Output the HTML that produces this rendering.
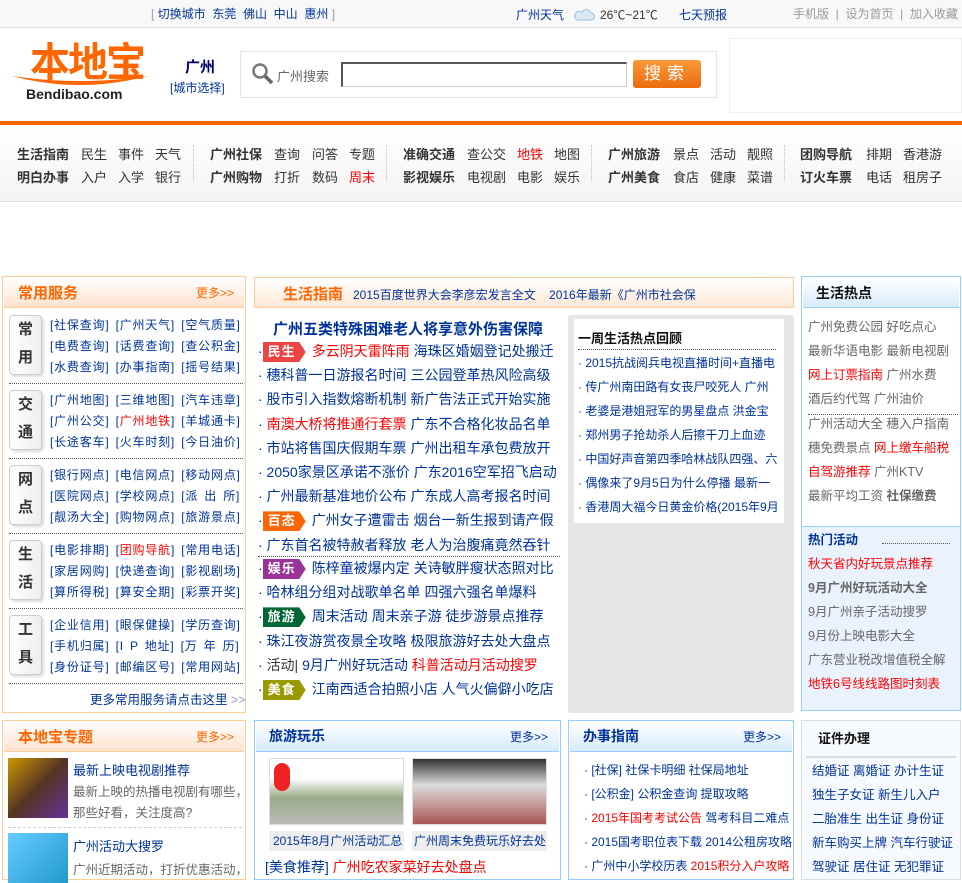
<!DOCTYPE html>
<html><head><meta charset="utf-8"><style>
*{margin:0;padding:0;box-sizing:border-box}
body{width:962px;height:875px;overflow:hidden;background:#fff;font-family:"Liberation Sans","Noto Sans CJK SC","WenQuanYi Zen Hei",sans-serif;font-size:12px;color:#333;position:relative}
.a{position:absolute;white-space:nowrap}
.b{color:#039}.r{color:#f00}.g{color:#666}.k{color:#333}
.top{left:0;top:0;width:962px;height:28px;background:#f8f8f8;border-bottom:1px solid #e0e0e0}
.nav{left:0;top:125px;width:962px;height:77px;background:linear-gradient(#fff,#f4f4f4);border-bottom:1px solid #e2e2e2}
.nav span{position:absolute;font-size:13px}
.nav b{position:absolute;font-size:13px;color:#333}
.sep{position:absolute;top:20px;height:36px;border-left:1px dotted #bbb}
.box{position:absolute;border:1px solid #fc9}
.oh{height:30px;background:linear-gradient(#fff,#fde2cc);border-bottom:1px solid #fc9;margin:1px}
.bh{height:30px;background:linear-gradient(#fff,#d6ebfb);border-bottom:1px solid #9cf;margin:1px}
.lab{position:absolute;left:6px;width:33px;height:60px;border:1px solid #ccc;border-radius:4px;background:linear-gradient(90deg,#fff,#eee);box-shadow:2px 2px 2px #ddd;font-size:15px;color:#333;text-align:center;line-height:28px;font-weight:bold}
.row{position:absolute;left:47px;font-size:12px;color:#039;letter-spacing:0.8px;word-spacing:2px;white-space:nowrap}
.ld{position:absolute;left:6px;width:234px;border-top:1px dotted #555}
.tag{display:inline-block;color:#fff;font-weight:bold;font-size:13px;padding:0 10px 0 5px;height:20px;line-height:20px;margin-right:6px;letter-spacing:1px;clip-path:polygon(0 0,85% 0,100% 50%,85% 100%,0 100%)}
.gl{position:absolute;left:578px;font-size:12px;color:#039;white-space:nowrap}
.rr{position:absolute;left:808px;font-size:12.5px;color:#666;white-space:nowrap}
.bd{position:absolute;left:584px;font-size:12px;color:#039;white-space:nowrap}
.zj{position:absolute;left:812px;font-size:12.5px;color:#039;white-space:nowrap}
</style></head><body>
<div class="a top"></div>
<div class="a" style="left:151px;top:5px;font-size:12px;color:#999">[ <span class="b">切换城市&nbsp; 东莞&nbsp; 佛山&nbsp; 中山&nbsp; 惠州</span> ]</div>
<div class="a b" style="left:516px;top:6px;font-size:12px">广州天气</div>
<svg class="a" style="left:573px;top:7px" width="22" height="14"><path d="M4 13h14a3.5 3.5 0 0 0 0-7 5 5 0 0 0-9-1 4 4 0 0 0-5 8z" fill="#dbe9f5" stroke="#9bbfdd"/></svg>
<div class="a k" style="left:600px;top:6px;font-size:12px">26℃~21℃</div>
<div class="a b" style="left:679px;top:6px;font-size:12px">七天预报</div>
<div class="a" style="left:793px;top:5px;font-size:12px;color:#999">手机版 &nbsp;|&nbsp; 设为首页 &nbsp;|&nbsp; 加入收藏</div>

<div class="a" style="left:30px;top:40px;font-size:40px;font-weight:bold;color:#f60;letter-spacing:-2px;line-height:46px">本地宝</div>
<svg class="a" style="left:10px;top:72px" width="140" height="16"><path d="M2 4Q70 22 138 4Q70 14 2 4z" fill="#f60"/></svg>
<div class="a" style="left:26px;top:86px;font-size:14px;font-weight:bold;color:#222">Bendibao.com</div>
<div class="a" style="left:185px;top:56px;font-size:15px;font-weight:bold;color:#006">广州</div>
<div class="a" style="left:170px;top:79px;font-size:12px;color:#039">[城市选择]</div>
<div class="a" style="left:240px;top:51px;width:477px;height:47px;border:1px solid #e3e3e3"></div>
<svg class="a" style="left:251px;top:62px" width="24" height="24"><circle cx="9" cy="9" r="6.5" fill="none" stroke="#777" stroke-width="2.5"/><path d="M14 14l7 7" stroke="#666" stroke-width="3.5"/></svg>
<div class="a g" style="left:277px;top:66px;font-size:13px">广州搜索</div>
<div class="a" style="left:341px;top:62px;width:286px;height:25px;border:1px solid #ccc;border-top:2px solid #555;border-left:2px solid #555"></div>
<div class="a" style="left:633px;top:60px;width:68px;height:28px;border-radius:3px;background:linear-gradient(#fa9a3a,#ec6b0c);color:#fff;font-size:17px;text-align:center;line-height:28px;letter-spacing:6px">搜索</div>
<div class="a" style="left:729px;top:38px;width:233px;height:75px;border:1px solid #eee"></div>
<div class="a" style="left:0;top:121px;width:962px;height:4px;background:#f60"></div>

<div class="a nav">
<b style="left:17px;top:19px">生活指南</b><span style="left:81px;top:19px">民生</span><span style="left:118px;top:19px">事件</span><span style="left:155px;top:19px">天气</span>
<b style="left:17px;top:42px">明白办事</b><span style="left:81px;top:42px">入户</span><span style="left:118px;top:42px">入学</span><span style="left:155px;top:42px">银行</span>
<div class="sep" style="left:193px"></div>
<b style="left:210px;top:19px">广州社保</b><span style="left:274px;top:19px">查询</span><span style="left:312px;top:19px">问答</span><span style="left:349px;top:19px">专题</span>
<b style="left:210px;top:42px">广州购物</b><span style="left:274px;top:42px">打折</span><span style="left:312px;top:42px">数码</span><span class="r" style="left:349px;top:42px">周末</span>
<div class="sep" style="left:386px"></div>
<b style="left:403px;top:19px">准确交通</b><span style="left:467px;top:19px">查公交</span><span class="r" style="left:517px;top:19px">地铁</span><span style="left:554px;top:19px">地图</span>
<b style="left:403px;top:42px">影视娱乐</b><span style="left:467px;top:42px">电视剧</span><span style="left:517px;top:42px">电影</span><span style="left:554px;top:42px">娱乐</span>
<div class="sep" style="left:591px"></div>
<b style="left:608px;top:19px">广州旅游</b><span style="left:673px;top:19px">景点</span><span style="left:710px;top:19px">活动</span><span style="left:747px;top:19px">靓照</span>
<b style="left:608px;top:42px">广州美食</b><span style="left:673px;top:42px">食店</span><span style="left:710px;top:42px">健康</span><span style="left:747px;top:42px">菜谱</span>
<div class="sep" style="left:784px"></div>
<b style="left:800px;top:19px">团购导航</b><span style="left:866px;top:19px">排期</span><span style="left:903px;top:19px">香港游</span>
<b style="left:800px;top:42px">订火车票</b><span style="left:866px;top:42px">电话</span><span style="left:903px;top:42px">租房子</span>
</div>

<div class="box" style="left:2px;top:276px;width:244px;height:437px">
<div class="oh"><span class="a" style="left:15px;top:5px;font-size:15px;font-weight:bold;color:#f60">常用服务</span><span class="a" style="left:193px;top:7px;font-size:12px;color:#f60">更多&gt;&gt;</span></div>
<div class="lab" style="top:38px">常<br>用</div>
<div class="row" style="top:39px">[社保查询] [广州天气] [空气质量]</div>
<div class="row" style="top:60px">[电费查询] [话费查询] [查公积金]</div>
<div class="row" style="top:81px">[水费查询] [办事指南] [摇号结果]</div>
<div class="ld" style="top:106px"></div>
<div class="lab" style="top:113px">交<br>通</div>
<div class="row" style="top:114px">[广州地图] [三维地图] [汽车违章]</div>
<div class="row" style="top:135px">[广州公交] [<span class="r">广州地铁</span>] [羊城通卡]</div>
<div class="row" style="top:156px">[长途客车] [火车时刻] [今日油价]</div>
<div class="ld" style="top:181px"></div>
<div class="lab" style="top:188px">网<br>点</div>
<div class="row" style="top:189px">[银行网点] [电信网点] [移动网点]</div>
<div class="row" style="top:210px">[医院网点] [学校网点] [派 出 所]</div>
<div class="row" style="top:231px">[靓汤大全] [购物网点] [旅游景点]</div>
<div class="ld" style="top:256px"></div>
<div class="lab" style="top:263px">生<br>活</div>
<div class="row" style="top:264px">[电影排期] [<span class="r">团购导航</span>] [常用电话]</div>
<div class="row" style="top:285px">[家居网购] [快递查询] [影视剧场]</div>
<div class="row" style="top:306px">[算所得税] [算安全期] [彩票开奖]</div>
<div class="ld" style="top:331px"></div>
<div class="lab" style="top:338px">工<br>具</div>
<div class="row" style="top:339px">[企业信用] [眼保健操] [学历查询]</div>
<div class="row" style="top:360px">[手机归属] [I P 地址] [万 年 历]</div>
<div class="row" style="top:381px">[身份证号] [邮编区号] [常用网站]</div>
<div class="ld" style="top:406px"></div>
<div class="a" style="left:87px;top:412px;font-size:12.5px;color:#039">更多常用服务请点击这里 <span style="color:#99c">&gt;&gt;</span></div>
</div>

<div class="box" style="left:254px;top:277px;width:540px;height:31px;background:linear-gradient(#fff,#fde8d6)">
<span class="a" style="left:28px;top:5px;font-size:15px;font-weight:bold;color:#f60">生活指南</span>
<span class="a b" style="left:98px;top:8px;font-size:12px">2015百度世界大会李彦宏发言全文 &nbsp;&nbsp; 2016年最新《广州市社会保</span>
</div>
<div class="a" style="left:273px;top:318px;font-size:15px;font-weight:bold;color:#039">广州五类特殊困难老人将享意外伤害保障</div>
<div class="a" style="left:258px;top:339px;font-size:14px;color:#039;line-height:24.2px;white-space:pre">·<span class="tag" style="background:#e44">民生</span><span class="r">多云阴天雷阵雨</span> 海珠区婚姻登记处搬迁
· 穗科普一日游报名时间 三公园登革热风险高级
· 股市引入指数熔断机制 新广告法正式开始实施
· <span class="r">南澳大桥将推通行套票</span> 广东不合格化妆品名单
· 市站将售国庆假期车票 广州出租车承包费放开
· 2050家景区承诺不涨价 广东2016空军招飞启动
· 广州最新基准地价公布 广东成人高考报名时间
·<span class="tag" style="background:#f60">百态</span>广州女子遭雷击 烟台一新生报到请产假
· 广东首名被特赦者释放 老人为治腹痛竟然吞针</div>
<div class="a" style="left:258px;top:556px;width:302px;border-top:1px dotted #555"></div>
<div class="a" style="left:258px;top:556px;font-size:14px;color:#039;line-height:24.2px;white-space:pre">·<span class="tag" style="background:#939">娱乐</span>陈梓童被爆内定 关诗敏胖瘦状态照对比
· 哈林组分组对战歌单名单 四强六强名单爆料
·<span class="tag" style="background:#063">旅游</span>周末活动 周末亲子游 徒步游景点推荐
· 珠江夜游赏夜景全攻略 极限旅游好去处大盘点
· <span class="k">活动|</span> 9月广州好玩活动 <span class="r">科普活动月活动搜罗</span>
·<span class="tag" style="background:#990">美食</span>江南西适合拍照小店 人气火偏僻小吃店</div>

<div class="a" style="left:568px;top:315px;width:226px;height:398px;background:#e6e6e6;border-radius:3px"></div>
<div class="a" style="left:574px;top:319px;width:210px;height:204px;background:#fff"></div>
<div class="a" style="left:578px;top:328px;font-size:13px;font-weight:bold;color:#111">一周生活热点回顾</div>
<div class="a" style="left:578px;top:349px;width:198px;border-top:1px dotted #555"></div>
<div class="gl" style="top:354px">· 2015抗战阅兵电视直播时间+直播电</div>
<div class="gl" style="top:378px">· 传广州南田路有女丧尸咬死人 广州</div>
<div class="gl" style="top:402px">· 老婆是港姐冠军的男星盘点 洪金宝</div>
<div class="gl" style="top:426px">· 郑州男子抢劫杀人后擦干刀上血迹</div>
<div class="gl" style="top:450px">· 中国好声音第四季哈林战队四强、六</div>
<div class="gl" style="top:474px">· 偶像来了9月5日为什么停播 最新一</div>
<div class="gl" style="top:498px">· 香港周大福今日黄金价格(2015年9月</div>

<div class="a" style="left:801px;top:276px;width:160px;height:435px;border:1px solid #9cf;background:#fff">
<div class="bh"><span class="a" style="left:14px;top:6px;font-size:14px;font-weight:bold;color:#111">生活热点</span></div>
<div class="a" style="left:0;top:249px;width:158px;height:184px;background:#eaf3fd;border-top:1px solid #9cf"></div>
<div class="a" style="left:6px;top:137px;width:150px;border-top:1px dotted #555"></div>
<div class="a" style="left:80px;top:266px;width:68px;border-top:1px dotted #555"></div>
</div>
<div class="rr" style="top:316px">广州免费公园 好吃点心</div>
<div class="rr" style="top:340px">最新华语电影 最新电视剧</div>
<div class="rr" style="top:364px"><span class="r">网上订票指南</span> 广州水费</div>
<div class="rr" style="top:388px">酒后约代驾 广州油价</div>
<div class="rr" style="top:413px">广州活动大全 穗入户指南</div>
<div class="rr" style="top:437px">穗免费景点 <span class="r">网上缴车船税</span></div>
<div class="rr" style="top:461px"><span class="r">自驾游推荐</span> 广州KTV</div>
<div class="rr" style="top:485px">最新平均工资 <b>社保缴费</b></div>
<div class="rr" style="top:529px;color:#039;font-weight:bold">热门活动</div>
<div class="rr" style="top:553px;color:#f00">秋天省内好玩景点推荐</div>
<div class="rr" style="top:577px;font-weight:bold">9月广州好玩活动大全</div>
<div class="rr" style="top:601px">9月广州亲子活动搜罗</div>
<div class="rr" style="top:625px">9月份上映电影大全</div>
<div class="rr" style="top:649px">广东营业税改增值税全解</div>
<div class="rr" style="top:673px;color:#f00">地铁6号线线路图时刻表</div>

<div class="box" style="left:2px;top:720px;width:244px;height:160px">
<div class="oh"><span class="a" style="left:15px;top:5px;font-size:15px;font-weight:bold;color:#f60">本地宝专题</span><span class="a" style="left:193px;top:7px;font-size:12px;color:#f60">更多&gt;&gt;</span></div>
<div class="a" style="left:5px;top:37px;width:60px;height:60px;background:linear-gradient(135deg,#c90,#532 50%,#639)"></div>
<div class="a b" style="left:70px;top:39px;font-size:13px">最新上映电视剧推荐</div>
<div class="a g" style="left:70px;top:61px;font-size:12.5px;line-height:21px">最新上映的热播电视剧有哪些，<br>那些好看，关注度高?</div>
<div class="a" style="left:5px;top:106px;width:234px;border-top:1px dashed #ccc"></div>
<div class="a" style="left:5px;top:112px;width:60px;height:50px;background:linear-gradient(135deg,#6cf,#29c)"></div>
<div class="a b" style="left:70px;top:115px;font-size:13px">广州活动大搜罗</div>
<div class="a g" style="left:70px;top:138px;font-size:12.5px">广州近期活动，打折优惠活动，</div>
</div>
<div class="a" style="left:254px;top:720px;width:307px;height:160px;border:1px solid #9cf">
<div class="bh"><span class="a" style="left:14px;top:5px;font-size:14px;font-weight:bold;color:#039">旅游玩乐</span><span class="a b" style="left:255px;top:7px;font-size:12px">更多&gt;&gt;</span></div>
<div class="a" style="left:14px;top:37px;width:135px;height:67px;border:1px solid #ddd;background:linear-gradient(#fff 30%,#9a8 60%,#bbb);"><div class="a" style="left:4px;top:4px;width:16px;height:28px;background:#e22;border-radius:8px"></div></div>
<div class="a" style="left:157px;top:37px;width:135px;height:67px;border:1px solid #ddd;background:linear-gradient(#333,#ddd 40%,#a55)"></div>
<div class="a b" style="left:14px;top:110px;width:135px;height:20px;background:#eee;font-size:12px;line-height:20px;padding-left:4px">2015年8月广州活动汇总</div>
<div class="a b" style="left:157px;top:110px;width:135px;height:20px;background:#eee;font-size:12px;line-height:20px;padding-left:2px;overflow:hidden">广州周末免费玩乐好去处</div>
<div class="a" style="left:10px;top:136px;font-size:14px"><span class="b">[美食推荐]</span> <span class="r">广州吃农家菜好去处盘点</span></div>
</div>
<div class="a" style="left:568px;top:720px;width:226px;height:160px;border:1px solid #9cf">
<div class="bh"><span class="a" style="left:14px;top:5px;font-size:14px;font-weight:bold;color:#039">办事指南</span><span class="a b" style="left:174px;top:7px;font-size:12px">更多&gt;&gt;</span></div>
</div>
<div class="bd" style="top:761px">· [社保] 社保卡明细 社保局地址</div>
<div class="bd" style="top:785px">· [公积金] 公积金查询 提取攻略</div>
<div class="bd" style="top:809px">· <span class="r">2015年国考考试公告</span> 驾考科目二难点</div>
<div class="bd" style="top:833px">· 2015国考职位表下载 2014公租房攻略</div>
<div class="bd" style="top:857px">· 广州中小学校历表 <span class="r">2015积分入户攻略</span></div>
<div class="a" style="left:801px;top:720px;width:160px;height:160px;border:1px solid #ddd;background:#f6f9fd">
<span class="a" style="left:16px;top:7px;font-size:13px;font-weight:bold;color:#111">证件办理</span>
<div class="a" style="left:4px;top:35px;width:150px;border-top:2px solid #ddd"></div>
</div>
<div class="zj" style="top:760px">结婚证 离婚证 办计生证</div>
<div class="zj" style="top:784px">独生子女证 新生儿入户</div>
<div class="zj" style="top:808px">二胎准生 出生证 身份证</div>
<div class="zj" style="top:832px">新车购买上牌 汽车行驶证</div>
<div class="zj" style="top:856px">驾驶证 居住证 无犯罪证</div>
</body></html>
